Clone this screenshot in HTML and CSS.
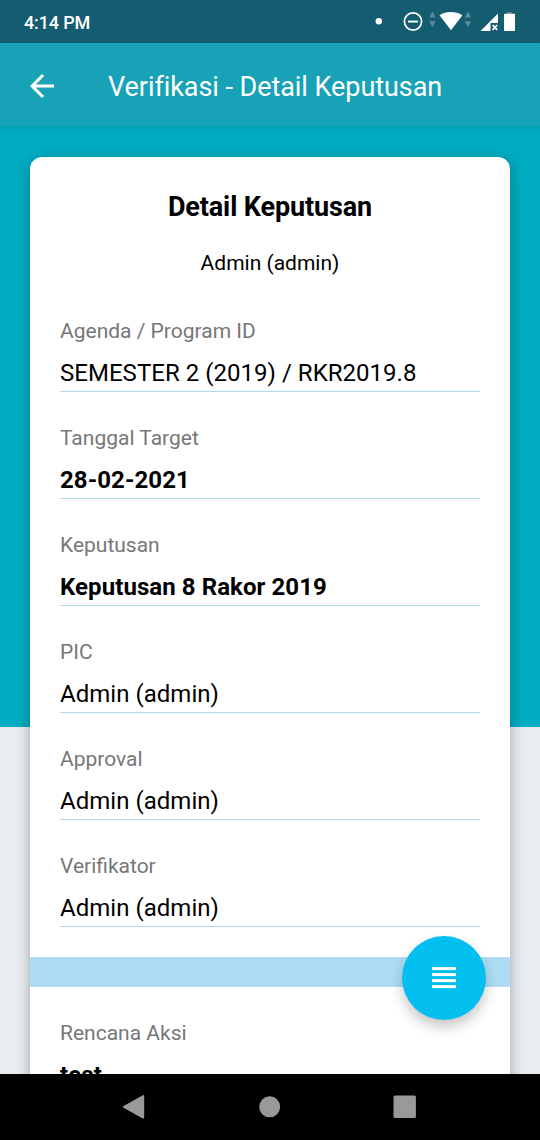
FILE: index.html
```html
<!DOCTYPE html>
<html lang="id">
<head>
<meta charset="utf-8">
<title>Verifikasi - Detail Keputusan</title>
<link rel="stylesheet" href="styles.css">
</head>
<body>
<div class="phone">
  <header class="status-bar">
    <span class="clock">4:14 PM</span>
    <svg class="status-icons" width="150" height="24" viewBox="370 10 150 24" fill="#fff">
      <circle cx="378.8" cy="21.2" r="3.2"/>
      <circle cx="413" cy="21.5" r="8.6" fill="none" stroke="#fff" stroke-width="1.7"/>
      <rect x="408" y="20.6" width="10" height="1.9"/>
      <g fill="#5b8b9c">
        <path d="M432.4 11.5l3.2 6h-6.4zM432.4 27.3l3.2-6h-6.4zM467.9 11.5l3.2 6h-6.4zM467.9 27.3l3.2-6h-6.4z"/>
      </g>
      <path d="M439.5 15.2C446 11 456 11 462.4 15.2L451 30.2z"/>
      <path d="M480.5 31L498 13.6V23H490.5V31z"/>
      <path d="M492.6 25l4.6 4.800M497.2 25l-4.6 4.800" stroke="#fff" stroke-width="1.7"/>
      <path d="M507.3 12h4.5v2h-4.500z" fill="#5b8b9c"/>
      <rect x="504" y="13.8" width="11" height="17.2" rx="0.8"/>
    </svg>
  </header>
  <nav class="toolbar">
    <svg class="back" width="24" height="24" viewBox="0 0 24 24" fill="#fff">
      <path d="M24 10.500H5.740L14.120 2.120 12 0 0 12l12 12 2.120-2.120L5.740 13.500H24z"/>
    </svg>
    <h1 class="toolbar-title">Verifikasi - Detail Keputusan</h1>
  </nav>
  <main class="content">
    <article class="card">
      <h2 class="card-title">Detail Keputusan</h2>
      <p class="card-subtitle">Admin (admin)</p>
      <section class="fields">
        <div class="field"><span class="label">Agenda / Program ID</span><span class="value">SEMESTER 2 (2019) / RKR2019.8</span></div>
        <div class="field"><span class="label">Tanggal Target</span><span class="value strong">28-02-2021</span></div>
        <div class="field"><span class="label">Keputusan</span><span class="value strong">Keputusan 8 Rakor 2019</span></div>
        <div class="field"><span class="label">PIC</span><span class="value">Admin (admin)</span></div>
        <div class="field"><span class="label">Approval</span><span class="value">Admin (admin)</span></div>
        <div class="field"><span class="label">Verifikator</span><span class="value">Admin (admin)</span></div>
      </section>
      <div class="band"></div>
      <section class="fields">
        <div class="field"><span class="label">Rencana Aksi</span><span class="value strong">test</span></div>
      </section>
    </article>
    <button class="fab" aria-label="Menu">
      <svg width="24" height="22" viewBox="0 0 24 22" fill="#fff">
        <rect y="0.1" width="24" height="3"/><rect y="6.1" width="24" height="3"/><rect y="12.1" width="24" height="3"/><rect y="18.1" width="24" height="3"/>
      </svg>
    </button>
  </main>
  <footer class="nav-bar">
    <svg width="24" height="26" viewBox="0 0 24 26"><path d="M20.2 2V23.600L1 12.800z" fill="#999" stroke="#999" stroke-width="2" stroke-linejoin="round"/></svg>
    <svg width="24" height="26" viewBox="0 0 24 26"><circle cx="11.7" cy="12.8" r="10.5" fill="#999"/></svg>
    <svg width="24" height="26" viewBox="0 0 24 26"><rect x="0.5" y="1.5" width="22.4" height="22.4" rx="1.5" fill="#999"/></svg>
  </footer>
</div>
</body>
</html>
```
FILE: styles.css
```css
* { box-sizing: border-box; margin: 0; padding: 0; }
body { font-family: Roboto, "Liberation Sans", sans-serif; color: #000; }
.phone { width: 540px; height: 1140px; display: flex; flex-direction: column; overflow: hidden; }
.status-bar {
  height: 43px; flex: none; background: #145d70; color: #fff;
  display: flex; align-items: center; justify-content: space-between;
  padding: 1px 20px 0 24px;
}
.clock { font-size: 18px; font-weight: 500; letter-spacing: -0.15px; }
.toolbar {
  height: 83px; flex: none; background: #17a2b8; color: #fff; z-index: 1;
  display: flex; align-items: center; gap: 54px; padding: 2px 0 0 30px;
  box-shadow: 0 1px 7px rgba(0, 0, 0, .12);
}
.toolbar-title { font-size: 27px; font-weight: 400; line-height: 32px; padding-top: 2px; letter-spacing: -0.06px; }
.content {
  flex: 1; min-height: 0; position: relative; overflow: hidden; padding: 31px 30px 0;
  background: linear-gradient(#00acc1 601px, #e9edf0 601px);
}
.card {
  height: 1000px; background: #fff; border-radius: 12px; overflow: hidden;
  box-shadow: 0 4px 14px rgba(0, 0, 0, .32);
}
.card-title { padding-top: 34px; font-size: 27px; line-height: 32px; font-weight: 700; text-align: center; letter-spacing: -0.12px; }
.card-subtitle { margin-top: 28px; height: 34px; font-size: 21px; line-height: 25px; text-align: center; }
.fields { padding: 0 30px; }
.field { height: 107px; border-bottom: 1px solid #b0dcea; padding-top: 34px; display: flex; flex-direction: column; }
.label { font-size: 21px; line-height: 25px; color: #777; }
.value { margin-top: 15px; font-size: 24px; line-height: 28px; letter-spacing: 0.03px; }
.strong { font-weight: 700; letter-spacing: 0.08px; }
.band { margin-top: 30px; height: 30px; background: #aedcf2; }
.fab {
  position: absolute; left: 402px; top: 810px; width: 84px; height: 84px; border: 0; border-radius: 50%;
  background: #03bff0; display: flex; align-items: center; justify-content: center;
  box-shadow: 0 7px 13px rgba(0, 0, 0, .22);
}
.nav-bar { height: 66px; flex: none; background: #000; display: flex; align-items: center; justify-content: center; gap: 111px; }
```
